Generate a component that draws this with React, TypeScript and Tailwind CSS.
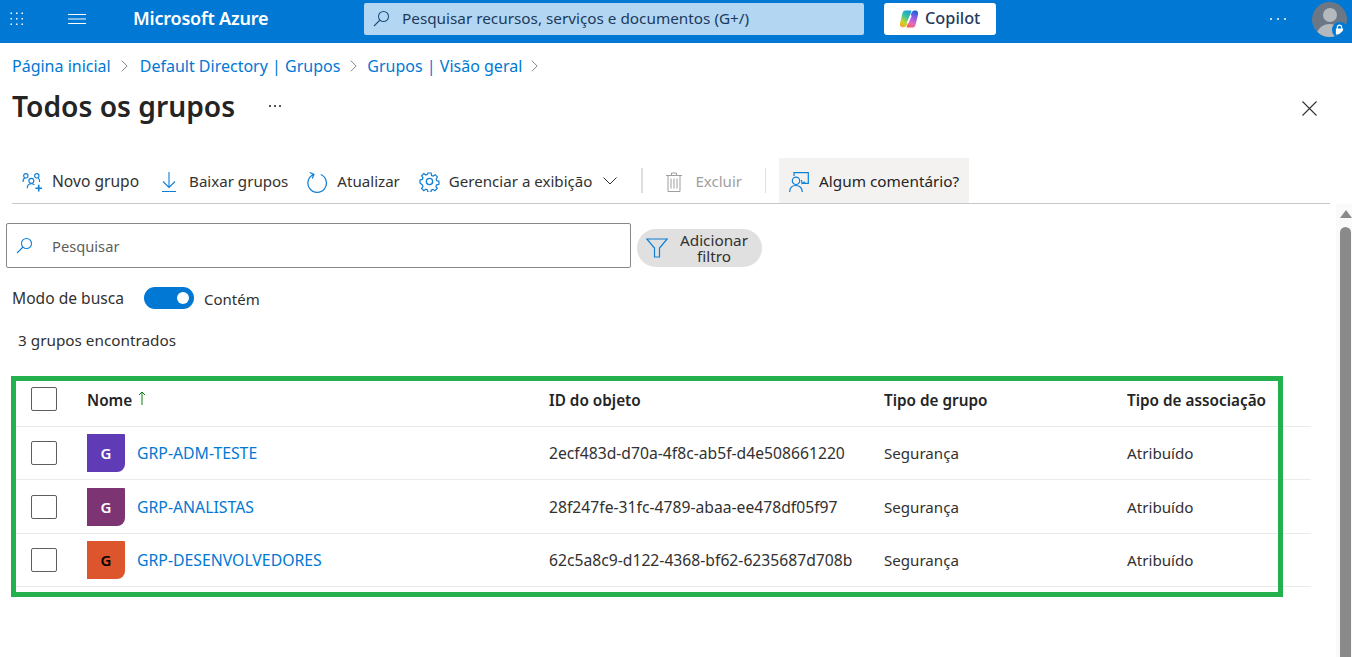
const groups = [
  { name: "GRP-ADM-TESTE", id: "2ecf483d-d70a-4f8c-ab5f-d4e508661220", color: "bg-[#5f3bb6]", letter: "text-white", height: "h-[53px]" },
  { name: "GRP-ANALISTAS", id: "28f247fe-31fc-4789-abaa-ee478df05f97", color: "bg-[#7c3572]", letter: "text-white", height: "h-[54px]" },
  { name: "GRP-DESENVOLVEDORES", id: "62c5a8c9-d122-4368-bf62-6235687d708b", color: "bg-[#dc552c]", letter: "text-black", height: "h-[53px]" },
];

function SearchGlass({ className }: { className: string }) {
  return (
    <svg viewBox="0 0 17 17" fill="none" stroke="currentColor" strokeWidth="1.100" className={className}>
      <circle cx="10.500" cy="6.500" r="5" />
      <path d="M7 10 1 16" />
    </svg>
  );
}

function CopilotLogo() {
  return (
    <svg viewBox="0 0 20 20" className="h-[20px] w-[20px]">
      <defs>
        <linearGradient id="cpLeft" x1="0.7" y1="0" x2="0.2" y2="1">
          <stop offset="0" stopColor="#1a9fd8" />
          <stop offset="0.35" stopColor="#35c3a0" />
          <stop offset="0.7" stopColor="#c4d62e" />
          <stop offset="1" stopColor="#f7a72b" />
        </linearGradient>
        <linearGradient id="cpRight" x1="0.6" y1="0" x2="0.3" y2="1">
          <stop offset="0" stopColor="#1565d8" />
          <stop offset="0.35" stopColor="#8a5ce6" />
          <stop offset="0.75" stopColor="#e868c4" />
          <stop offset="1" stopColor="#f2604f" />
        </linearGradient>
      </defs>
      <path d="M6 1.500h6.500L8.200 15c-.5 1.600-1.700 3.300-3.700 3.300h-1C1.500 18.300.400 16.200 1 14.200L3.500 4C3.900 2.500 4.800 1.500 6 1.500Z" fill="url(#cpLeft)" />
      <path d="M14 18.500H7.500L12 5c.5-1.600 1.500-3.500 3.500-3.500h1c2 0 3.100 2.100 2.500 4.100L16.500 16c-.4 1.500-1.300 2.500-2.500 2.500Z" fill="url(#cpRight)" />
      <path d="M11.700 7 8.700 13.500" stroke="white" strokeWidth="1.800" strokeLinecap="round" />
    </svg>
  );
}

function GroupIcon() {
  return (
    <svg viewBox="0 0 22 20" fill="none" stroke="#0f7fd6" strokeWidth="1.200" className="h-[20px] w-[21px]">
      <circle cx="4" cy="3.500" r="2.300" />
      <circle cx="15.500" cy="3.500" r="2.300" />
      <circle cx="9.800" cy="8.800" r="2.600" />
      <path d="M1 10c0-2.500.8-3.800 2-4.300M18.500 10c0-2.500-.6-3.800-1.500-4.300M5.500 16.500c0-2.700 1.600-4.700 4.300-4.700 1.400 0 2.500.5 3.200 1.300" />
      <path d="M17.500 13v7M14 16.500h7" strokeWidth="1.700" />
    </svg>
  );
}

function FeedbackIcon() {
  return (
    <svg viewBox="0 0 20 20" fill="none" stroke="#0f7fd6" strokeWidth="1.200" className="h-[20px] w-[20px]">
      <path d="M5 4V.700h14.300v10.600h-5.500" />
      <circle cx="7" cy="8.800" r="3.700" />
      <path d="M.7 20c0-4 2.500-6.500 6.300-6.500s6.300 2.500 6.300 6.500" />
      <path d="m12.500 8 .5 3.500 3-1.800" />
    </svg>
  );
}

function Checkbox() {
  return <div className="h-[24px] w-[26px] rounded-[2px] border border-[#605e5c] bg-white" />;
}

function ToolButton({ icon, label, className }: { icon: React.ReactNode; label: string; className: string }) {
  return (
    <div className={`flex h-full items-center pt-[2px] ${className}`}>
      {icon}
      <span>{label}</span>
    </div>
  );
}

export default function App() {
  return (
    <div className="relative flex h-[657px] w-[1352px] flex-col overflow-hidden bg-white font-['Noto_Sans','Open_Sans',sans-serif] text-[15.600px] text-[#323130]">
      {/* top bar */}
      <header className="flex h-[43px] shrink-0 items-center bg-[#0078d4] pb-[6px] text-white">
        <svg viewBox="0 0 16 16" fill="white" className="ml-[9px] h-[16px] w-[16px]">
          {[1.500, 7, 12.500].flatMap((y) =>
            [1.500, 7, 12.500].map((x) => <rect key={`${x}-${y}`} x={x} y={y} width="1.500" height="1.500" />),
          )}
        </svg>
        <svg viewBox="0 0 18 12" stroke="white" strokeWidth="1" className="ml-[43px] h-[12px] w-[18px]">
          <path d="M0 1.500h18M0 6h18M0 10.500h18" />
        </svg>
        <span className="ml-[47px] w-[231px] text-[18px] font-semibold tracking-[-0.2px]">Microsoft Azure</span>
        <div className="flex h-[32px] w-[500px] items-center rounded-[2px] bg-[#b3d6f2] text-[15.300px] text-[#1b3a5c]">
          <SearchGlass className="ml-[9px] h-[17px] w-[17px] text-[#1b4f80]" />
          <span className="ml-[12px]">Pesquisar recursos, serviços e documentos (G+/)</span>
        </div>
        <div className="ml-[20px] flex h-[32px] w-[112px] items-center rounded-[3px] bg-white pl-[15px] text-[16.300px] font-medium text-[#243a5e]">
          <CopilotLogo />
          <span className="ml-[6px]">Copilot</span>
        </div>
        <div className="ml-[274px] flex gap-[5px]">
          <span className="h-[2px] w-[2px] rounded-full bg-white" />
          <span className="h-[2px] w-[2px] rounded-full bg-white" />
          <span className="h-[2px] w-[2px] rounded-full bg-white" />
        </div>
        <div className="relative ml-[26px] mt-[1px] h-[35px] w-[35px] overflow-hidden rounded-full bg-[#6b7785]">
          <div className="absolute left-[11px] top-[6px] h-[14px] w-[14px] rounded-full bg-[#b4b9be]" />
          <div className="absolute left-[4px] top-[22px] h-[20px] w-[27px] rounded-t-full bg-[#b4b9be]" />
          <div className="absolute left-[20px] top-[20px] flex h-[16px] w-[16px] items-center justify-center rounded-full bg-[#0078d4]">
            <svg viewBox="0 0 10 12" fill="white" className="mb-[1px] mr-[1px] h-[11px] w-[9px]">
              <path d="M1 5h1V3.500a3 3 0 0 1 6 0V5h1v6.500H1Zm2.300 0h3.400V3.500a1.700 1.700 0 0 0-3.400 0Z" />
            </svg>
          </div>
        </div>
      </header>

      {/* breadcrumb */}
      <nav className="mt-[11px] flex h-[24px] items-center pl-[12px] text-[16px] text-[#0078d4]">
        <span>Página inicial</span>
        <svg viewBox="0 0 8 14" fill="none" stroke="#737373" strokeWidth="1" className="ml-[10px] mr-[12px] h-[14px] w-[7px]">
          <path d="m1 1 6 6-6 6" />
        </svg>
        <span>Default Directory | Grupos</span>
        <svg viewBox="0 0 8 14" fill="none" stroke="#737373" strokeWidth="1" className="mx-[10px] h-[14px] w-[7px]">
          <path d="m1 1 6 6-6 6" />
        </svg>
        <span>Grupos | Visão geral</span>
        <svg viewBox="0 0 8 14" fill="none" stroke="#737373" strokeWidth="1" className="ml-[9px] h-[14px] w-[7px]">
          <path d="m1 1 6 6-6 6" />
        </svg>
      </nav>

      {/* title */}
      <div className="mt-[6px] flex h-[44px] items-center pl-[12px]">
        <h1 className="w-[257px] text-[28.200px] font-semibold text-[#242424]">Todos os grupos</h1>
        <div className="flex gap-[3px]">
          <span className="h-[1.500px] w-[2px] bg-[#555]" />
          <span className="h-[1.500px] w-[2px] bg-[#555]" />
          <span className="h-[1.500px] w-[2px] bg-[#555]" />
        </div>
        <svg viewBox="0 0 15 15" fill="none" stroke="#323130" strokeWidth="1.100" className="ml-[1021px] mt-[5px] h-[15px] w-[15px]">
          <path d="m.5.500 14 14M14.500.500l-14 14" />
        </svg>
      </div>

      {/* toolbar */}
      <div className="ml-[12px] mt-[30px] flex h-[46px] w-[1318px] items-center border-b border-[#c8c8c8] text-[15.100px]">
        <ToolButton className="ml-[10px] gap-[9px] text-[15.600px]" icon={<GroupIcon />} label="Novo grupo" />
        <ToolButton
          className="ml-[22px] gap-[12px]"
          icon={
            <svg viewBox="0 0 16 20" fill="none" stroke="#0f7fd6" strokeWidth="1.100" className="h-[20px] w-[16px]">
              <path d="M8 0v15M2 9.500 8 15.500l6-6M1 19.500h14" />
            </svg>
          }
          label="Baixar grupos"
        />
        <ToolButton
          className="ml-[19px] gap-[9px]"
          icon={
            <svg viewBox="0 0 22 22" fill="none" stroke="#0f7fd6" strokeWidth="1.300" className="h-[22px] w-[21px]">
              <path d="M14.500 3.200a9.700 9.700 0 1 1-7.500-.1M2.800 1 7.300 3 5.500 7.300" />
            </svg>
          }
          label="Atualizar"
        />
        <ToolButton
          className="ml-[19px] gap-[9px]"
          icon={
            <svg viewBox="0 0 20 20" fill="none" stroke="#0f7fd6" strokeWidth="1.300" className="h-[21px] w-[21px]">
              <circle cx="10" cy="10" r="3" />
              <path d="M8.300 1h3.400l.5 2.600 1.700.7 2.200-1.500 2.300 2.400-1.400 2.200.7 1.700 2.300.5v3.400l-2.500.5-.7 1.700 1.400 2.200-2.400 2.300-2.100-1.400-1.700.7-.5 2.400H8.300l-.5-2.500-1.700-.7-2.100 1.500-2.400-2.400 1.500-2.100-.7-1.700L0 11.700V8.300l2.400-.5.7-1.700L1.700 4 4 1.700l2.100 1.400 1.700-.7Z" transform="translate(1 1) scale(.9)" />
            </svg>
          }
          label="Gerenciar a exibição"
        />
        <svg viewBox="0 0 14 8" fill="none" stroke="#323130" strokeWidth="1" className="ml-[11px] mt-[1px] h-[8px] w-[14px]">
          <path d="m.5.500 6.500 6.500 6.500-6.500" />
        </svg>
        <div className="ml-[24px] h-[25px] w-[2px] bg-[#e1dfdd]" />
        <ToolButton
          className="ml-[23px] gap-[13px] text-[#a19f9d]"
          icon={
            <svg viewBox="0 0 16 20" fill="none" stroke="#a19f9d" strokeWidth="1" className="h-[20px] w-[16px]">
              <path d="M0 3.500h16M5.500 3.500V1h5v2.500M2 3.500h12v16H2ZM5 6.500v10M8 6.500v10M11 6.500v10" />
            </svg>
          }
          label="Excluir"
        />
        <div className="ml-[23px] h-[25px] w-px bg-[#e1dfdd]" />
        <ToolButton className="ml-[13px] w-[190px] gap-[10px] bg-[#f3f2f1] pl-[10px] text-[15.300px] text-[#242424]" icon={<FeedbackIcon />} label="Algum comentário?" />
      </div>

      {/* search and filter */}
      <div className="ml-[6px] mt-[19px] flex h-[45px] items-center">
        <div className="flex h-[45px] w-[625px] items-center rounded-[2px] border border-[#8a8886] text-[14.700px] text-[#605e5c]">
          <SearchGlass className="ml-[9px] h-[17px] w-[17px] text-[#0f7fd6]" />
          <span className="ml-[19px] pt-[1px]">Pesquisar</span>
        </div>
        <div className="ml-[6px] mt-[5px] flex h-[38px] w-[125px] items-center rounded-full bg-[#e0e0e0] pl-[9px]">
          <svg viewBox="0 0 22 20" fill="none" stroke="#0f7fd6" strokeWidth="1.200" className="h-[20px] w-[22px]">
            <path d="M.8 1h20.400l-7.700 9v9h-5v-9Z" />
          </svg>
          <span className="ml-[10px] w-[72px] text-center text-[15.300px] leading-[16px]">Adicionar filtro</span>
        </div>
      </div>

      {/* search mode */}
      <div className="ml-[12px] mt-[16px] flex h-[27px] items-center">
        <span className="w-[132px] pt-[3px]">Modo de busca</span>
        <div className="flex h-[22px] w-[50px] items-center justify-end rounded-full bg-[#0078d4] pr-[5px]">
          <span className="h-[12px] w-[12px] rounded-full bg-white" />
        </div>
        <span className="ml-[10px] pt-[3px] text-[15px]">Contém</span>
      </div>

      <div className="ml-[18px] mt-[19px] h-[20px] text-[15.300px] leading-[20px]">3 grupos encontrados</div>

      {/* table */}
      <div className="ml-[16px] mt-[26px] w-[1295px] leading-[20px]">
        <div className="flex h-[51px] items-center border-b border-[#edebe9] pb-[4px] text-[15.300px] font-semibold text-[#242424]">
          <div className="w-[71px] pl-[15px]">
            <Checkbox />
          </div>
          <div className="flex w-[462px] items-center gap-[6px] pt-[1px]">
            Nome
            <svg viewBox="0 0 8 14" fill="none" stroke="#107c10" strokeWidth="1" className="mb-[3px] h-[14px] w-[8px]">
              <path d="M4 14V1M1 4l3-3 3 3" />
            </svg>
          </div>
          <div className="w-[335px] pt-[1px]">ID do objeto</div>
          <div className="w-[243px] pt-[1px]">Tipo de grupo</div>
          <div className="pt-[1px]">Tipo de associação</div>
        </div>
        {groups.map((g) => (
          <div key={g.name} className={`flex items-center border-b border-[#edebe9] text-[15.100px] ${g.height}`}>
            <div className="w-[71px] pl-[15px]">
              <Checkbox />
            </div>
            <div className="flex w-[462px] items-center">
              <div className={`flex h-[38px] w-[38px] items-center justify-center rounded-br-[8px] rounded-tr-[1px] text-[15px] font-semibold ${g.color} ${g.letter}`}>
                G
              </div>
              <span className="ml-[12px] text-[15.800px] text-[#0078d4]">{g.name}</span>
            </div>
            <div className="w-[335px] text-[15.700px]">{g.id}</div>
            <div className="w-[243px]">Segurança</div>
            <div className="text-[15.200px]">Atribuído</div>
          </div>
        ))}
      </div>

      {/* annotation */}
      <div className="pointer-events-none absolute left-[11px] top-[376px] h-[221px] w-[1272px] border-[5px] border-[#22b14c]" />

      {/* scrollbar */}
      <div className="absolute right-0 top-[204px] flex h-[453px] w-[16px] flex-col bg-[#fafafa] pl-[4px]">
        <div className="mt-[6px] h-0 w-0 border-x-[6px] border-b-[8px] border-x-transparent border-b-[#8a8a8a]" />
        <div className="mt-[9px] w-[11px] flex-1 rounded-t-full bg-[#8a8a8a]" />
      </div>
    </div>
  );
}
